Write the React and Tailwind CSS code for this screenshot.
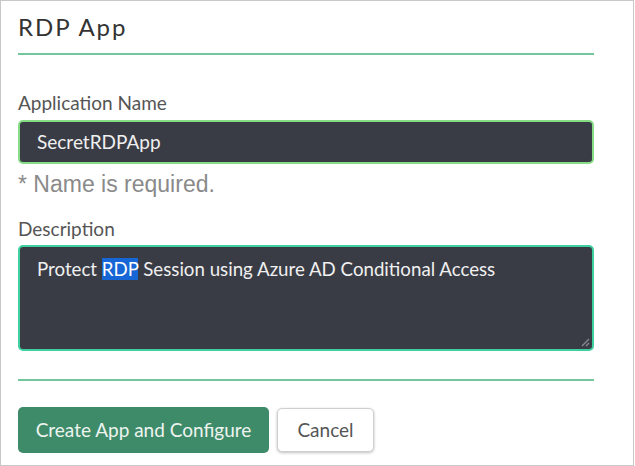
import React from "react";

const ResizeGrip = () => (
  <svg width="10" height="10" viewBox="0 0 10 10" className="absolute right-[2px] bottom-[2px]">
    <line x1="9" y1="2" x2="2" y2="9" stroke="#8a8c92" strokeWidth="1.2" />
    <line x1="9" y1="6" x2="6" y2="9" stroke="#8a8c92" strokeWidth="1.2" />
  </svg>
);

export default function App() {
  return (
    <div className="w-[634px] h-[466px] bg-white border border-[#c8c8c8] font-['Lato',sans-serif]">
      <div className="w-[576px] ml-[17px] flex flex-col">
        <h1 className="mt-[10px] text-[24px] leading-[32px] tracking-[2px] text-[#333]">
          RDP App
        </h1>
        <div className="mt-[10px] h-[2px] bg-[#74c79c]" />

        <label className="mt-[37px] text-[19px] leading-[22px] text-[#555]">
          Application Name
        </label>
        <div className="mt-[6px] h-[44px] rounded-[5px] border-2 border-[#86dd86] bg-[#3a3c45] flex items-center pl-[17px] text-[19px] text-[#f0f0f0]">
          SecretRDPApp
        </div>
        <p className="mt-[7px] font-['Liberation_Sans',Arial,sans-serif] text-[23px] leading-[26px] text-[#8a8a8a]">
          * Name is required.
        </p>

        <label className="mt-[21px] text-[19px] leading-[22px] text-[#555]">
          Description
        </label>
        <div className="relative mt-[5px] h-[106px] rounded-[5px] border-2 border-[#3fd0a0] bg-[#3a3c45] pl-[17px] pt-[10px] text-[18.7px] leading-[24px] text-[#f0f0f0]">
          Protect <span className="bg-[#1766d6] text-white">RDP</span> Session using Azure AD Conditional Access
          <ResizeGrip />
        </div>

        <div className="mt-[28px] h-[2px] bg-[#74c79c]" />

        <div className="mt-[26px] flex items-start gap-[8px]">
          <button className="w-[251px] h-[46px] rounded-[5px] bg-[#3e8b69] text-[#eef4f0] text-[19px]">
            Create App and Configure
          </button>
          <button className="mt-[1px] w-[97px] h-[44px] rounded-[5px] bg-white border border-[#cfcfcf] shadow-[0_1px_3px_rgba(0,0,0,0.25)] text-[#555] text-[19px]">
            Cancel
          </button>
        </div>
      </div>
    </div>
  );
}
